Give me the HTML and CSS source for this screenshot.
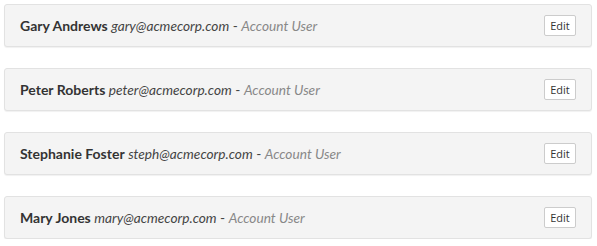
FILE: index.html
```html
<!DOCTYPE html>
<html>
<head>
<meta charset="utf-8">
<link rel="stylesheet" href="styles.css">
</head>
<body>
<ul class="users">
  <li class="user">
    <div class="info"><span class="name">Gary Andrews</span> <span class="email">gary@acmecorp.com</span> - <span class="role">Account User</span></div>
    <button class="edit">Edit</button>
  </li>
  <li class="user">
    <div class="info"><span class="name">Peter Roberts</span> <span class="email">peter@acmecorp.com</span> - <span class="role">Account User</span></div>
    <button class="edit">Edit</button>
  </li>
  <li class="user">
    <div class="info"><span class="name">Stephanie Foster</span> <span class="email">steph@acmecorp.com</span> - <span class="role">Account User</span></div>
    <button class="edit">Edit</button>
  </li>
  <li class="user">
    <div class="info"><span class="name">Mary Jones</span> <span class="email">mary@acmecorp.com</span> - <span class="role">Account User</span></div>
    <button class="edit">Edit</button>
  </li>
</ul>
</body>
</html>
```
FILE: styles.css
```css
html, body {
  margin: 0;
  padding: 0;
  background: #fff;
}
body {
  font-family: Lato, "Open Sans", sans-serif;
  color: #333;
}
.users {
  list-style: none;
  margin: 0;
  padding: 4px 5px 0 4px;
  display: flex;
  flex-direction: column;
  gap: 21px;
}
.user {
  display: flex;
  align-items: center;
  justify-content: space-between;
  height: 43px;
  box-sizing: border-box;
  padding: 0 15px 0 15px;
  background: #f4f4f4;
  border: 1px solid #e2e2e2;
  border-radius: 3px;
  box-shadow: 0 1px 1px rgba(0,0,0,0.06);
}
.info {
  font-size: 13.7px;
  color: #444;
  white-space: nowrap;
}
.name {
  font-size: 14px;
  font-weight: 700;
  color: #333;
}
.email {
  font-style: italic;
  color: #444;
}
.role {
  font-style: italic;
  color: #888;
}
.edit {
  font-family: "Open Sans", sans-serif;
  font-size: 11px;
  color: #333;
  background: #fff;
  border: 1px solid #ccc;
  border-radius: 2px;
  height: 21px;
  width: 32px;
  padding: 0;
  line-height: 19px;
}
```
